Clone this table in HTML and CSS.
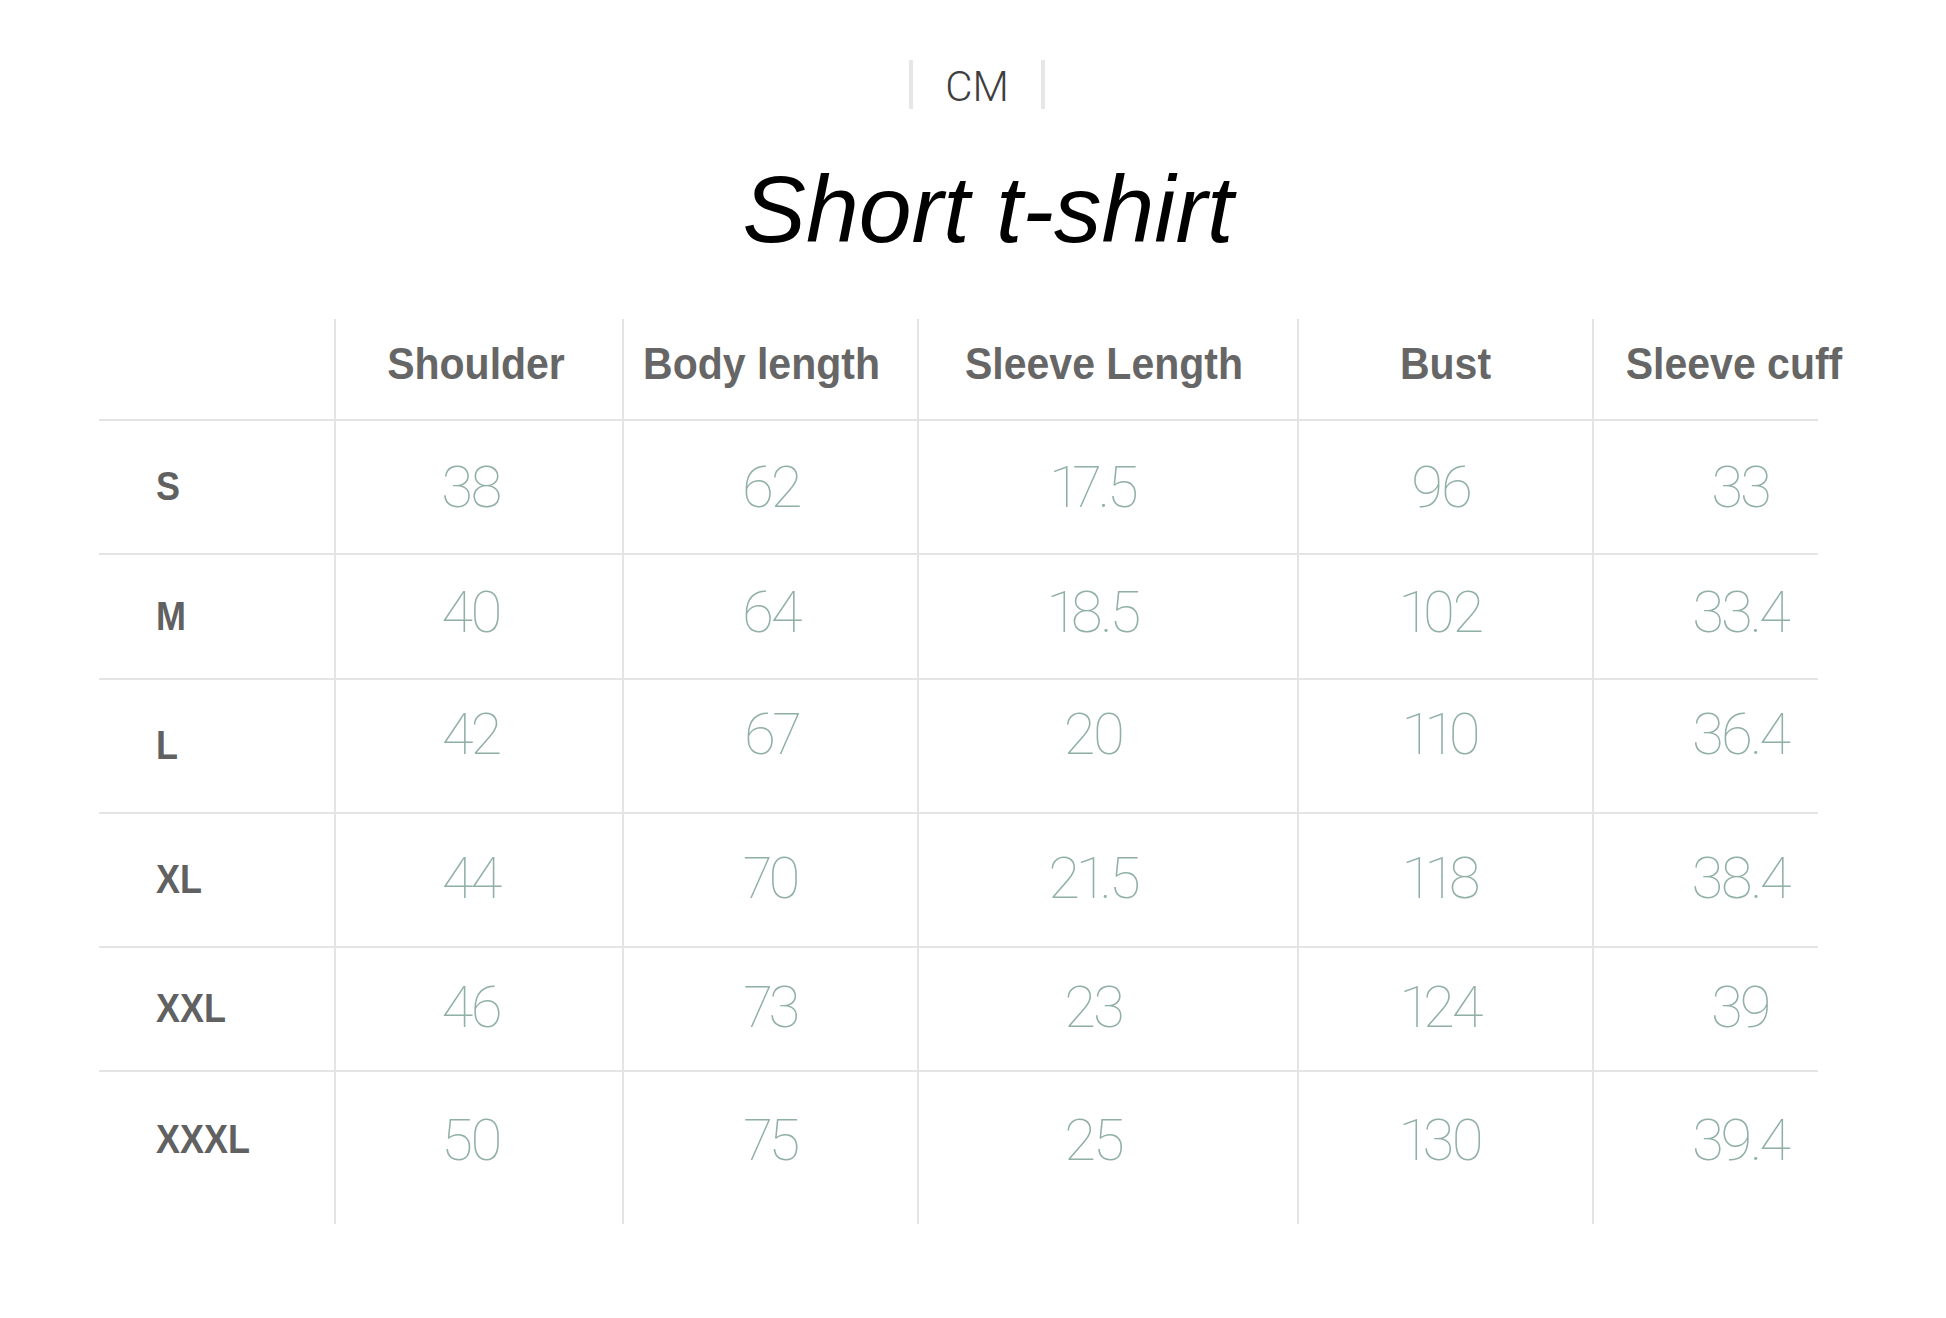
FILE: index.html
```html
<!DOCTYPE html>
<html lang="en">
<head>
<meta charset="utf-8">
<title>Short t-shirt size chart</title>
<link rel="stylesheet" href="styles.css">
</head>
<body>
<div class="page">
  <div class="unit-bar"><span class="unit">CM</span></div>
  <h1 class="title">Short t-shirt</h1>
  <div class="sheet">
    <div class="row head">
      <div class="cell c0"></div>
      <div class="cell c1"><span class="hd">Shoulder</span></div>
      <div class="cell c2"><span class="hd">Body length</span></div>
      <div class="cell c3"><span class="hd">Sleeve Length</span></div>
      <div class="cell c4"><span class="hd">Bust</span></div>
      <div class="cell c5"><span class="hd">Sleeve cuff</span></div>
    </div>
    <div class="row r-s">
      <div class="cell c0"><span class="lbl">S</span></div>
      <div class="cell c1"><span class="num">38</span></div>
      <div class="cell c2"><span class="num">62</span></div>
      <div class="cell c3"><span class="num">17.5</span></div>
      <div class="cell c4"><span class="num">96</span></div>
      <div class="cell c5"><span class="num">33</span></div>
    </div>
    <div class="row r-m">
      <div class="cell c0"><span class="lbl">M</span></div>
      <div class="cell c1"><span class="num">40</span></div>
      <div class="cell c2"><span class="num">64</span></div>
      <div class="cell c3"><span class="num">18.5</span></div>
      <div class="cell c4"><span class="num">102</span></div>
      <div class="cell c5"><span class="num">33.4</span></div>
    </div>
    <div class="row r-l">
      <div class="cell c0"><span class="lbl">L</span></div>
      <div class="cell c1"><span class="num">42</span></div>
      <div class="cell c2"><span class="num">67</span></div>
      <div class="cell c3"><span class="num">20</span></div>
      <div class="cell c4"><span class="num">110</span></div>
      <div class="cell c5"><span class="num">36.4</span></div>
    </div>
    <div class="row r-xl">
      <div class="cell c0"><span class="lbl">XL</span></div>
      <div class="cell c1"><span class="num">44</span></div>
      <div class="cell c2"><span class="num">70</span></div>
      <div class="cell c3"><span class="num">21.5</span></div>
      <div class="cell c4"><span class="num">118</span></div>
      <div class="cell c5"><span class="num">38.4</span></div>
    </div>
    <div class="row r-xxl">
      <div class="cell c0"><span class="lbl">XXL</span></div>
      <div class="cell c1"><span class="num">46</span></div>
      <div class="cell c2"><span class="num">73</span></div>
      <div class="cell c3"><span class="num">23</span></div>
      <div class="cell c4"><span class="num">124</span></div>
      <div class="cell c5"><span class="num">39</span></div>
    </div>
    <div class="row r-xxxl">
      <div class="cell c0"><span class="lbl">XXXL</span></div>
      <div class="cell c1"><span class="num">50</span></div>
      <div class="cell c2"><span class="num">75</span></div>
      <div class="cell c3"><span class="num">25</span></div>
      <div class="cell c4"><span class="num">130</span></div>
      <div class="cell c5"><span class="num">39.4</span></div>
    </div>
  </div>
</div>
</body>
</html>
```
FILE: styles.css
```css
html, body {
  margin: 0;
  padding: 0;
  background: #ffffff;
}

.page {
  width: 1946px;
  min-height: 1318px;
  padding-top: 60px;
  box-sizing: border-box;
  font-family: "Liberation Sans", Arial, sans-serif;
}

.unit-bar {
  display: flex;
  justify-content: center;
  padding-left: 8px;
}

.unit {
  display: flex;
  align-items: center;
  justify-content: center;
  height: 49px;
  padding: 4px 32px 0;
  box-sizing: border-box;
  border-left: 4px solid #e6e6e6;
  border-right: 4px solid #e6e6e6;
  font-family: Roboto, "Liberation Sans", sans-serif;
  font-weight: 300;
  font-size: 42px;
  color: #3e3e3e;
}

.title {
  margin: 45px 0 0;
  padding-left: 30px;
  text-align: center;
  font-family: "Liberation Sans", Arial, sans-serif;
  font-style: italic;
  font-weight: 400;
  font-size: 95px;
  line-height: 110px;
  color: #000;
}

.sheet {
  margin: 55px 0 0 99px;
  width: 1719px;
}

.row {
  display: grid;
  grid-template-columns: 235px 288px 295px 380px 295px 226px;
  box-sizing: border-box;
}

.row + .row {
  border-top: 2px solid #e4e4e4;
}

.head { height: 100px; }
.r-s { height: 134px; }
.r-m { height: 125px; }
.r-l { height: 134px; }
.r-xl { height: 134px; }
.r-xxl { height: 124px; }
.r-xxxl { height: 154px; }

.cell {
  display: flex;
  align-items: center;
  justify-content: center;
  white-space: nowrap;
  box-sizing: border-box;
}

.cell + .cell {
  border-left: 2px solid #e4e4e4;
}

.c0 {
  justify-content: flex-start;
  padding-left: 57px;
}

.c1 { padding-right: 17px; }
.c3 { padding-right: 30px; }
.c4 { padding-right: 10px; }
.c5 { padding-left: 68px; }
.head .c1 { padding-right: 6px; }
.head .c2 { padding-right: 18px; }
.head .c3 { padding-right: 8px; }
.head .c4 { padding-right: 0; }
.head .c5 { padding-left: 56px; }

.head .cell { padding-bottom: 10px; }
.r-l .cell + .cell { padding-bottom: 24px; }
.r-m .cell + .cell { padding-bottom: 10px; }
.r-xl .cell + .cell { padding-bottom: 4px; }
.r-xxl .cell + .cell { padding-bottom: 4px; }
.r-xxxl .cell { padding-bottom: 16px; }

.hd {
  display: inline-block;
  font-family: "Liberation Sans", Arial, sans-serif;
  font-weight: 700;
  font-size: 41px;
  color: #666666;
  transform: scaleY(1.1);
}

.lbl {
  display: inline-block;
  font-family: "Liberation Sans", Arial, sans-serif;
  font-weight: 700;
  font-size: 36px;
  color: #616161;
  transform: scaleY(1.12);
}

.num {
  display: inline-block;
  font-family: Roboto, "Liberation Sans", sans-serif;
  font-weight: 100;
  font-size: 58px;
  letter-spacing: -3px;
  font-variant-numeric: proportional-nums;
  color: #91b0a5;
}
```
